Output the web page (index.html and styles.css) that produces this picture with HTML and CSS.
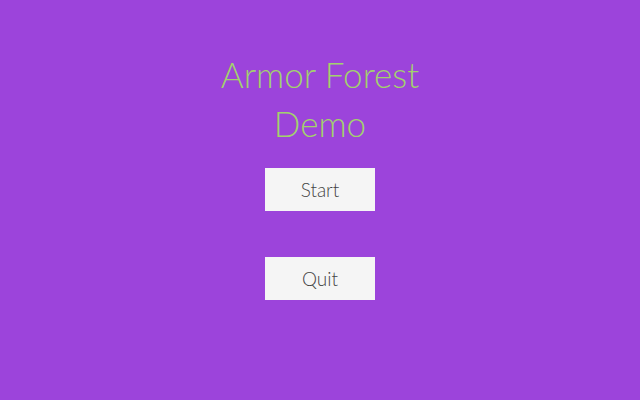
FILE: index.html
```html
<!DOCTYPE html>
<html>
<head>
<meta charset="utf-8">
<link rel="stylesheet" href="styles.css">
</head>
<body>
<main class="menu">
  <h1 class="title">Armor Forest<br>Demo</h1>
  <div class="buttons">
    <button class="btn">Start</button>
    <button class="btn">Quit</button>
  </div>
</main>
</body>
</html>
```
FILE: styles.css
```css
html, body {
  margin: 0;
  padding: 0;
  height: 100%;
}
body {
  background: #9c44db;
  font-family: Lato, "Open Sans", sans-serif;
}
.menu {
  display: flex;
  flex-direction: column;
  align-items: center;
  padding-top: 50px;
}
.title {
  margin: 0;
  font-weight: 300;
  font-size: 35px;
  line-height: 49px;
  color: #a3d16e;
  text-align: center;
}
.buttons {
  display: flex;
  flex-direction: column;
  align-items: center;
  gap: 46px;
  margin-top: 20px;
}
.btn {
  width: 110px;
  height: 43px;
  border: none;
  background: #f5f5f5;
  color: #444;
  font-family: Lato, "Open Sans", sans-serif;
  font-weight: 300;
  font-size: 19px;
  padding: 0;
}
```
